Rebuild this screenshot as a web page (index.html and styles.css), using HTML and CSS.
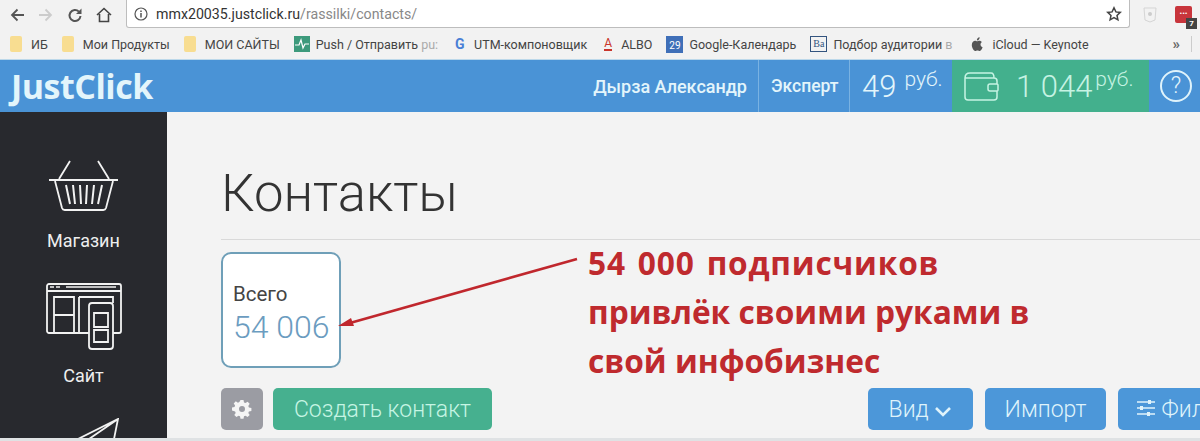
FILE: index.html
```html
<!DOCTYPE html>
<html lang="ru">
<head>
    <meta charset="UTF-8">
    <title>Контакты</title>
    <link rel="stylesheet" href="styles.css">
</head>
<body>
    <div class="toolbar">
        <svg class="nav-icon" viewBox="0 0 16 16"><path d="M15 8H3M8.500 2.500L3 8l5.500 5.500" fill="none" stroke="#555" stroke-width="1.800"/></svg>
        <svg class="nav-icon" viewBox="0 0 16 16"><path d="M1 8h12M7.500 2.500L13 8l-5.500 5.500" fill="none" stroke="#ccc" stroke-width="1.800"/></svg>
        <svg class="nav-icon" viewBox="0 0 16 16"><path d="M13.500 9a5.500 5.500 0 1 1-1.600-4.400" fill="none" stroke="#555" stroke-width="2"/><path d="M14.500 1.500v5.500H9z" fill="#555"/></svg>
        <svg class="nav-icon" viewBox="0 0 16 16"><path d="M1 8l7-6.500L15 8M3.500 7v7.500h9V7" fill="none" stroke="#444" stroke-width="1.600"/></svg>
        <div class="address">
            <svg class="info" viewBox="0 0 14 14"><circle cx="7" cy="7" r="6" fill="none" stroke="#555" stroke-width="1.200"/><path d="M7 6v4.500M7 3.500v1.500" stroke="#555" stroke-width="1.500"/></svg>
            <span class="host">mmx20035.justclick.ru</span><span class="path">/rassilki/contacts/</span>
            <svg class="star" viewBox="0 0 16 16"><path d="M8 1.800l1.900 4.100 4.400.5-3.300 3 .9 4.400L8 11.600l-3.900 2.200.9-4.400-3.300-3 4.400-.5z" fill="none" stroke="#444" stroke-width="1.500"/></svg>
        </div>
        <svg class="ext-shield" viewBox="0 0 16 18"><path d="M2 2h12l-1 12-5 2-5-2z" fill="#f2f2f2" stroke="#d5d5d5"/><circle cx="8" cy="8" r="2" fill="#ccc"/></svg>
        <div class="ext-red">
            <span>•••</span>
            <span class="ext-badge">7</span>
        </div>
    </div>

    <div class="bookmarks">
        <span class="bm"><i class="folder"></i>ИБ</span>
        <span class="bm"><i class="folder"></i>Мои Продукты</span>
        <span class="bm"><i class="folder"></i>МОИ САЙТЫ</span>
        <span class="bm bm-wide"><svg class="bm-icon" viewBox="0 0 16 16"><rect width="16" height="16" fill="#3d9a7c"/><path d="M1 9h4l2-5 2 8 2-4h4" fill="none" stroke="#fff" stroke-width="1.200"/></svg>Push / Отправить <span class="fade">pu:</span></span>
        <span class="bm bm-wide"><span class="g-mark">G</span>UTM-компоновщик</span>
        <span class="bm"><span class="a-mark">A</span>ALBO</span>
        <span class="bm"><span class="cal-mark">29</span>Google-Календарь</span>
        <span class="bm bm-wide"><span class="ba-mark">Ba</span>Подбор аудитории <span class="fade">в</span></span>
        <span class="bm"><svg class="bm-icon apple" viewBox="0 0 16 16"><path d="M11.500 8.500c0-1.700 1.300-2.400 1.400-2.500-.8-1.100-1.900-1.300-2.400-1.300-1-.1-1.900.6-2.400.6s-1.300-.6-2.100-.6C4.900 4.700 2.800 5.900 2.800 9c0 2.500 1.900 6 3.500 6 .8 0 1.200-.6 2.200-.6s1.300.6 2.200.6c1.400 0 2.600-2.600 2.900-3.700-1.500-.6-2.100-1.700-2.100-2.800zM9.900 3.500c.5-.6.8-1.400.7-2.200-.7 0-1.500.5-2 1-.4.5-.8 1.300-.7 2.100.8 0 1.500-.4 2-.9z" fill="#555"/></svg>iCloud — Keynote</span>
        <span class="bm-more">»</span>
        <i class="bm-sep"></i>
    </div>

    <header class="topbar">
        <div class="logo">JustClick</div>
        <div class="top-cell top-name">Дырза Александр</div>
        <div class="top-cell top-plan">Эксперт</div>
        <div class="top-cell top-money">49 <sup>руб.</sup></div>
        <div class="top-cell wallet">
            <svg class="wallet-icon" viewBox="0 0 36 32"><path d="M2 8c0-3 2-5 5-5h21c2 0 3 2 3 5M2 8v19a3 3 0 0 0 3 3h26a3 3 0 0 0 3-3v-6M34 14v-3a3 3 0 0 0-3-3H2M34 14h-7a2 2 0 0 0-2 2v3a2 2 0 0 0 2 2h7a1 1 0 0 0 1-1v-5a1 1 0 0 0-1-1z" fill="none" stroke="#c6f3e3" stroke-width="1.500"/></svg>
            1 044 <sup>руб.</sup>
        </div>
        <div class="help"><span>?</span></div>
    </header>

    <div class="main">
        <aside class="sidebar">
            <div class="side-item">
                <svg width="70" height="54" viewBox="0 0 70 54"><g fill="none" stroke="#f2f2f2" stroke-width="1.800"><path d="M0 20h69M21 1L10 19M49 1l11 18M6 21l7 27a3 3 0 0 0 3 2h38a3 3 0 0 0 3-2l7-27"/><path d="M17 25l4 19M24 25l2 19M31 25l1 19M38 25l-1 19M45 25l-2 19M53 25l-4 19" stroke-width="2"/></g></svg>
                <span>Магазин</span>
            </div>
            <div class="side-item">
                <svg class="site-icon" width="76" height="68" viewBox="0 0 76 68"><g fill="none" stroke="#f2f2f2" stroke-width="1.800"><path d="M43 50H3a2 2 0 0 1-2-2V3a2 2 0 0 1 2-2h70a2 2 0 0 1 2 2v45a2 2 0 0 1-2 2h-6M1 8h74M8 14h20v18H8zM8 32h20v18H8zM33 14h34v6M33 14v36"/><rect x="43" y="20" width="24" height="46" rx="3"/><path d="M48 30h14v14H48zM48 47h14v12H48z"/></g><path d="M4 4h4M10 4h4M20 4h50" stroke="#f2f2f2" stroke-width="1.500"/></svg>
                <span>Сайт</span>
            </div>
            <div class="side-item">
                <svg width="70" height="21" viewBox="0 0 70 21"><path d="M29 21L69 1l-4 20M69 1L40 21" fill="none" stroke="#f2f2f2" stroke-width="1.800"/></svg>
            </div>
        </aside>

        <main class="content">
            <h1 class="title">Контакты</h1>
            <div class="stats">
                <div class="stat-card">
                    <div class="stat-label">Всего</div>
                    <div class="stat-value">54 006</div>
                </div>
                <div class="note"><span class="note-first">54 000 подписчиков</span><br>привлёк своими руками в<br>свой инфобизнес</div>
            </div>
            <div class="actions">
                <button class="btn-gear">
                    <svg width="20" height="20" viewBox="0 0 20 20"><path fill-rule="evenodd" fill="#f5f5f5" d="M8.500 1h3l.5 2.500 1.500.6 2.100-1.400 2.100 2.100-1.400 2.100.6 1.500 2.500.5v3l-2.500.5-.6 1.500 1.400 2.100-2.100 2.100-2.100-1.400-1.500.6-.5 2.500h-3l-.5-2.500-1.500-.6-2.100 1.400-2.100-2.100 1.400-2.100-.6-1.500L0 11.500v-3l2.500-.5.6-1.500-1.400-2.100 2.100-2.100 2.100 1.400 1.500-.6zM10 7a3 3 0 1 0 0 6 3 3 0 0 0 0-6z"/></svg>
                </button>
                <button class="btn btn-green">Создать контакт</button>
                <div class="actions-right">
                    <button class="btn btn-blue btn-view">Вид <svg width="18" height="11" viewBox="0 0 18 11"><path d="M2 2l7 7 7-7" fill="none" stroke="#dff3fb" stroke-width="2.600"/></svg></button>
                    <button class="btn btn-blue btn-import">Импорт</button>
                    <button class="btn btn-blue btn-filter"><svg width="20" height="18" viewBox="0 0 20 18"><path d="M1 3h18M1 9h18M1 15h18" stroke="#dff3fb" stroke-width="1.500"/><path d="M12 1h3v4h-3zM4 7h3v4H4zM11 13h3v4h-3z" fill="#dff3fb"/></svg> Фильтр</button>
                </div>
            </div>
        </main>

        <svg class="arrow" width="250" height="80" viewBox="0 0 250 80"><path d="M241 5L14 69" stroke="#c0272d" stroke-width="2.600"/><path d="M2 72l13-8 3 8z" fill="#c0272d"/></svg>
    </div>
</body>
</html>
```
FILE: styles.css
```css
* {
    box-sizing: border-box;
}
html, body {
    margin: 0;
    height: 441px;
    overflow: hidden;
}
body {
    font-family: Roboto, "Liberation Sans", sans-serif;
    background-color: #f3f3f3;
    display: flex;
    flex-direction: column;
}

/* browser chrome */
.toolbar {
    height: 29px;
    display: flex;
    align-items: center;
    padding-left: 9px;
    background-color: #f2f2f2;
    flex-shrink: 0;
}
.nav-icon {
    width: 16px;
    height: 16px;
    margin-right: 13px;
}
.address {
    width: 1004px;
    height: 28px;
    margin-left: 1px;
    margin-top: -1px;
    display: flex;
    align-items: center;
    padding-left: 7px;
    padding-right: 7px;
    background-color: #fff;
    border: 1px solid #bdbdbd;
    border-top: none;
    border-radius: 0 0 3px 3px;
    font-size: 14.200px;
}
.info {
    width: 14px;
    height: 14px;
    margin-right: 8px;
}
.host {
    color: #333;
}
.path {
    color: #888;
}
.star {
    width: 16px;
    height: 16px;
    margin-left: auto;
}
.ext-shield {
    width: 16px;
    height: 18px;
    margin-left: 12px;
}
.ext-red {
    position: relative;
    width: 17px;
    height: 17px;
    margin-left: 17px;
    margin-top: -1px;
    border-radius: 2px;
    background-color: #c8353c;
    color: #fff;
    font-size: 8px;
    line-height: 15px;
    text-align: center;
}
.ext-badge {
    position: absolute;
    right: -5px;
    bottom: -6px;
    width: 11px;
    height: 11px;
    background-color: #444;
    font-size: 8px;
    font-weight: 700;
    line-height: 11px;
}
.bookmarks {
    height: 30px;
    display: flex;
    align-items: center;
    gap: 14px;
    padding-left: 10px;
    font-size: 12.500px;
    color: #444;
    background-color: #f2f2f2;
    flex-shrink: 0;
    white-space: pre;
}
.bm {
    display: flex;
    align-items: center;
}
.bm-wide {
    margin-right: 3px;
}
.folder {
    width: 12px;
    height: 16px;
    margin-right: 9px;
    border-radius: 2px;
    background-color: #f8dd91;
}
.bm-icon {
    width: 16px;
    height: 16px;
    margin-right: 6px;
}
.apple {
    margin-right: 7px;
}
.fade {
    color: #aaa;
}
.g-mark {
    width: 12px;
    margin-right: 7px;
    font-size: 14px;
    font-weight: 700;
    color: #4a7fd6;
}
.a-mark {
    width: 8px;
    margin-right: 9px;
    font-size: 12px;
    color: #c9352b;
    border-bottom: 2px solid #c9352b;
    line-height: 12px;
}
.cal-mark {
    width: 17px;
    height: 17px;
    margin-right: 6px;
    font-size: 10px;
    line-height: 20px;
    text-align: center;
    color: #fff;
    background-color: #3f6fb8;
}
.ba-mark {
    width: 17px;
    height: 16px;
    margin-right: 6px;
    font-family: "Liberation Serif", serif;
    font-size: 10px;
    line-height: 14px;
    text-align: center;
    color: #33547f;
    border: 1px solid #33547f;
}
.bm-more {
    margin-left: auto;
    font-size: 15px;
    font-weight: 700;
    color: #666;
}
.bm-sep {
    width: 1px;
    height: 16px;
    margin-left: -3px;
    margin-right: 8px;
    background-color: #ccc;
}

/* site header */
.topbar {
    height: 53px;
    display: flex;
    background-color: #4a93d6;
    color: #e3f5fb;
    border-top: 1px solid #bcd8ea;
    flex-shrink: 0;
}
.logo {
    width: 167px;
    margin-right: auto;
    padding-left: 11px;
    font-family: "Open Sans", sans-serif;
    font-size: 34px;
    font-weight: 700;
    line-height: 52px;
    letter-spacing: -0.5px;
}
.top-cell {
    display: flex;
    align-items: center;
    border-left: 1px solid #79b2e2;
    white-space: nowrap;
}
.top-name {
    border-left: none;
    padding-right: 11px;
    font-size: 18px;
    font-weight: 500;
}
.top-plan {
    width: 91px;
    padding-left: 12px;
    font-size: 17.500px;
    font-weight: 500;
}
.top-money, .wallet {
    font-size: 31px;
    font-weight: 300;
}
.top-money {
    width: 103px;
    padding-left: 12px;
}
sup {
    align-self: flex-start;
    margin-top: 9px;
    margin-left: 8px;
    font-size: 21px;
    line-height: 21px;
}
.wallet {
    width: 197px;
    padding-left: 11px;
    gap: 17px;
    border-left: none;
    background-color: #43b08d;
    color: #c6f3e3;
}
.wallet-icon {
    width: 36px;
    height: 32px;
}
.wallet sup {
    margin-left: -14px;
}
.help {
    width: 51px;
    display: flex;
    align-items: center;
    padding-left: 11px;
}
.help span {
    width: 32px;
    height: 32px;
    border: 2px solid #dff3fb;
    border-radius: 50%;
    font-size: 23px;
    font-weight: 300;
    line-height: 28px;
    text-align: center;
}

/* page body */
.main {
    position: relative;
    flex: 1;
    display: flex;
    min-height: 0;
    overflow: hidden;
    border-bottom: 3px solid #dfe2e4;
}
.sidebar {
    width: 167px;
    flex-shrink: 0;
    overflow: hidden;
    background-color: #28292e;
    color: #eee;
    font-size: 18px;
    line-height: 20px;
    text-align: center;
    padding-top: 48px;
}
.side-item {
    display: flex;
    flex-direction: column;
    align-items: center;
}
.side-item span {
    margin-top: 17px;
    margin-bottom: 32px;
}
.site-icon {
    margin-bottom: -2px;
}
.content {
    flex: 1;
    min-width: 0;
    padding-left: 54px;
}
.title {
    margin: 0 0 12px;
    height: 128px;
    padding-top: 47px;
    font-size: 52.700px;
    line-height: 68px;
    font-weight: 300;
    color: #333;
    border-bottom: 1px solid #d9d9d9;
}
.stats {
    display: flex;
    height: 116px;
}
.stat-card {
    width: 120px;
    height: 116px;
    flex-shrink: 0;
    padding: 28px 10px 0;
    background-color: #fff;
    border: 2px solid #6f9fb8;
    border-radius: 10px;
}
.stat-label {
    font-size: 20.500px;
    line-height: 24px;
    color: #444;
}
.stat-value {
    margin-top: 4px;
    font-size: 32px;
    line-height: 34px;
    font-weight: 300;
    color: #6b9cc0;
    white-space: nowrap;
}
.note {
    margin-left: 247px;
    margin-top: -14px;
    font-family: "Open Sans", sans-serif;
    font-size: 31.700px;
    line-height: 49px;
    font-weight: 700;
    color: #bf2a2e;
    white-space: nowrap;
}
.note-first {
    letter-spacing: 0.8px;
    word-spacing: 3px;
}
.actions {
    display: flex;
    margin-top: 20px;
}
.btn-gear, .btn {
    height: 42px;
    flex-shrink: 0;
    border: none;
    border-radius: 5px;
    font-family: inherit;
    padding: 0;
}
.btn-gear {
    width: 42px;
    display: flex;
    align-items: center;
    justify-content: center;
    background-color: #9b9ca3;
}
.btn {
    font-size: 23px;
    font-weight: 300;
    color: #dff3fb;
    white-space: nowrap;
}
.btn-green {
    width: 219px;
    margin-left: 10px;
    background-color: #46b08f;
    color: #c6f5e4;
}
.actions-right {
    display: flex;
    flex-shrink: 0;
    gap: 12px;
    margin-left: 376px;
}
.btn-blue {
    background-color: #4c97d9;
}
.btn-view {
    width: 105px;
}
.btn-import {
    width: 121px;
}
.btn-filter {
    width: 130px;
    padding-left: 18px;
    text-align: left;
}
.arrow {
    position: absolute;
    left: 336px;
    top: 142px;
}
```
